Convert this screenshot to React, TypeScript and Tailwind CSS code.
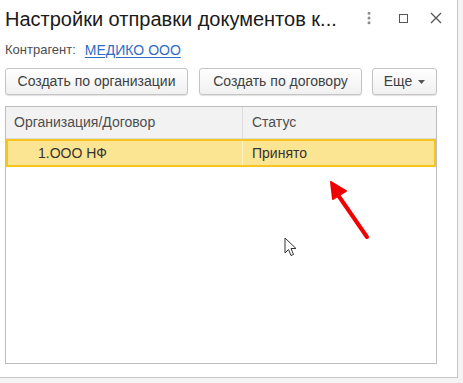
import { MoreVertical } from 'lucide-react';

const font = { fontFamily: '"Liberation Sans", Arial, sans-serif' };

function ToolButton({ children, className }: { children: React.ReactNode; className?: string }) {
  return (
    <button
      className={`h-[27px] rounded-[3px] border border-[#c4c4c4] bg-gradient-to-b from-white to-[#f0f0f0] text-[14px] text-[#404040] shadow-[0_1px_1px_rgba(0,0,0,0.12)] ${className ?? ''}`}
    >
      {children}
    </button>
  );
}

export default function App() {
  return (
    <div className="w-[463px] h-[383px] bg-[#f4f4f4] overflow-hidden" style={font}>
      <div className="w-[458px] h-[378px] bg-white border-r border-b border-[#c6c6c6] flex flex-col">
        {/* title bar */}
        <div className="h-[36px] flex items-center pl-[5px] pr-[14px]">
          <div className="flex-1 text-[20px] text-[#1a1a1a] leading-none pt-[2px]">
            Настройки отправки документов к...
          </div>
          <MoreVertical className="w-[16px] h-[16px] text-[#8a8a8a] mr-[20px]" strokeWidth={2.5} />
          <div className="w-[9px] h-[9px] border-[1.5px] border-[#555] mr-[22px] ml-[2px]" />
          <svg width="12" height="12" viewBox="0 0 12 12" className="mr-[1px]">
            <path d="M1 1 L11 11 M11 1 L1 11" stroke="#555" strokeWidth="1.3" />
          </svg>
        </div>

        {/* counterparty */}
        <div className="h-[24px] flex items-center pl-[5px] text-[13px] mt-[2px]">
          <span className="text-[#4d4d4d]">Контрагент:</span>
          <a className="ml-[9px] text-[14px] text-[#2f6dc4] underline underline-offset-2">МЕДИКО ООО</a>
        </div>

        {/* toolbar */}
        <div className="flex items-center pl-[5px] mt-[6px]">
          <ToolButton className="w-[183px]">Создать по организации</ToolButton>
          <ToolButton className="w-[163px] ml-[11px]">Создать по договору</ToolButton>
          <ToolButton className="w-[65px] ml-[10px] flex items-center justify-center gap-[6px]">
            <span>Еще</span>
            <svg width="7" height="4" viewBox="0 0 7 4">
              <path d="M0 0 H7 L3.5 4 Z" fill="#555" />
            </svg>
          </ToolButton>
        </div>

        {/* table */}
        <div className="ml-[5px] mt-[11px] w-[432px] h-[258px] border border-[#bdbdbd] bg-white flex flex-col">
          <div className="h-[32px] flex bg-[#f2f2f2] border-b border-[#dcdcdc] text-[14px] text-[#4d4d4d]">
            <div className="w-[237px] border-r border-[#dcdcdc] flex items-center pl-[8px]">
              Организация/Договор
            </div>
            <div className="flex-1 flex items-center pl-[9px]">Статус</div>
          </div>
          <div className="h-[28px] flex bg-[#fce592] border-2 border-[#f7c520] text-[14px] text-[#333]">
            <div className="w-[235px] border-r border-[#fff3c8] flex items-center pl-[30px]">
              1.ООО НФ
            </div>
            <div className="flex-1 flex items-center pl-[9px]">Принято</div>
          </div>
          <div className="flex-1 relative">
            {/* red arrow annotation */}
            <svg className="absolute left-[318px] top-[10px]" width="50" height="64" viewBox="0 0 50 64">
              <path d="M43 60 L14 18" stroke="#f00000" strokeWidth="4" strokeLinecap="round" />
              <path d="M7 5 L22 14 L9 22 Z" fill="#f00000" stroke="#f00000" strokeWidth="2" strokeLinejoin="round" />
            </svg>
            {/* mouse cursor */}
            <svg className="absolute left-[278px] top-[70px]" width="14" height="22" viewBox="0 0 14 22">
              <path
                d="M1 1 L1 16 L4.5 12.5 L7 18.5 L9.5 17.5 L7 11.5 L12 11.5 Z"
                fill="white"
                stroke="#333"
                strokeWidth="1"
                strokeLinejoin="round"
              />
            </svg>
          </div>
        </div>
      </div>
    </div>
  );
}
